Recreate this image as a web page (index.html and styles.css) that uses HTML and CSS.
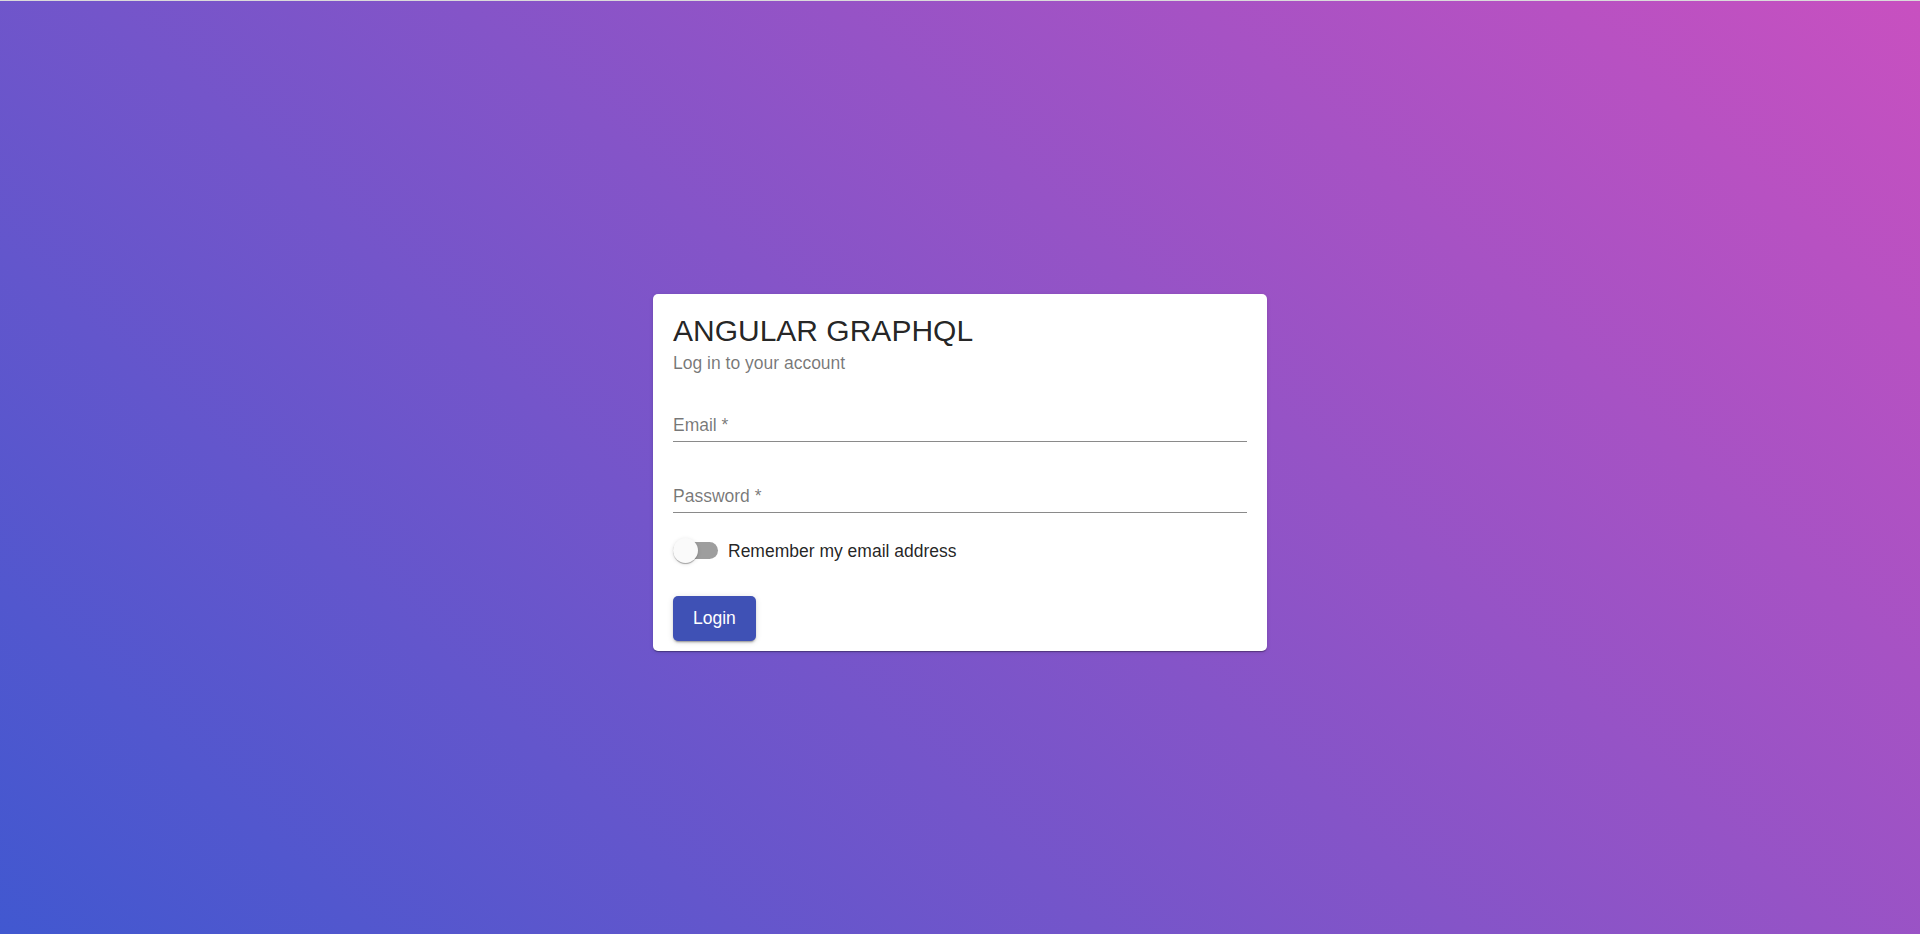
FILE: index.html
```html
<!DOCTYPE html>
<html lang="en">
<head>
<meta charset="utf-8">
<title>Angular GraphQL - Login</title>
<link rel="stylesheet" href="styles.css">
</head>
<body>
<div class="page">
  <div class="card">
    <div class="card-title">ANGULAR GRAPHQL</div>
    <div class="card-subtitle">Log in to your account</div>
    <form class="form">
      <label class="field">
        <span class="field-label">Email *</span>
        <span class="field-line"></span>
      </label>
      <label class="field field-password">
        <span class="field-label">Password *</span>
        <span class="field-line"></span>
      </label>
      <div class="toggle-row">
        <span class="toggle">
          <span class="toggle-track"></span>
          <span class="toggle-thumb"></span>
        </span>
        <span class="toggle-label">Remember my email address</span>
      </div>
      <div class="actions">
        <button type="button" class="btn">Login</button>
      </div>
    </form>
  </div>
</div>
</body>
</html>
```

FILE: styles.css
```css
html, body {
  margin: 0;
  padding: 0;
  height: 100%;
}

body {
  font-family: "Liberation Sans", Arial, sans-serif;
  border-top: 1px solid #dadada;
  box-sizing: border-box;
  background: linear-gradient(43deg, #4158d0 0%, #c850c0 100%);
}

.page {
  box-sizing: border-box;
  height: 933px;
  display: flex;
  justify-content: center;
  align-items: flex-start;
  padding-top: 293px;
}

.card {
  width: 614px;
  box-sizing: border-box;
  background: #ffffff;
  border-radius: 5px;
  padding: 20px 20px 10px;
  box-shadow: 0 2px 1px -1px rgba(0,0,0,.2), 0 1px 1px 0 rgba(0,0,0,.14), 0 1px 4px 0 rgba(0,0,0,.12);
}

.card-title {
  font-size: 30px;
  line-height: 34px;
  color: rgba(0,0,0,.87);
  font-weight: 400;
}

.card-subtitle {
  margin-top: 5px;
  font-size: 17.5px;
  line-height: 20px;
  color: rgba(0,0,0,.54);
}

.form {
  margin: 0;
  display: flex;
  flex-direction: column;
}

.field {
  display: flex;
  flex-direction: column;
  margin-top: 42px;
}

.field-password {
  margin-top: 44px;
}

.field-label {
  font-size: 17.5px;
  line-height: 20px;
  color: rgba(0,0,0,.54);
  padding-bottom: 6px;
}

.field-line {
  display: block;
  height: 1px;
  background: #8a8a8a;
}

.toggle-row {
  margin-top: 24px;
  display: flex;
  align-items: center;
  height: 27px;
}

.toggle {
  position: relative;
  width: 45px;
  height: 27px;
  flex: none;
  display: flex;
  align-items: center;
}

.toggle-track {
  display: block;
  width: 45px;
  height: 17.5px;
  border-radius: 9px;
  background: rgba(0,0,0,.38);
}

.toggle-thumb {
  position: absolute;
  left: 0;
  top: 1px;
  width: 25px;
  height: 25px;
  border-radius: 50%;
  background: #fafafa;
  box-shadow: 0 2px 1px -1px rgba(0,0,0,.2), 0 1px 1px 0 rgba(0,0,0,.14), 0 1px 4px 0 rgba(0,0,0,.12);
}

.toggle-label {
  margin-left: 10px;
  font-size: 17.5px;
  line-height: 20px;
  color: rgba(0,0,0,.87);
  padding-top: 0;
}

.actions {
  margin-top: 32px;
  display: flex;
}

.btn {
  height: 45px;
  min-width: 80px;
  padding: 0 20px;
  border: none;
  border-radius: 5px;
  background: #3f51b5;
  color: #ffffff;
  font-family: "Liberation Sans", Arial, sans-serif;
  font-size: 17.5px;
  font-weight: 500;
  line-height: 45px;
  box-shadow: 0 3px 1px -2px rgba(0,0,0,.2), 0 2px 2px 0 rgba(0,0,0,.14), 0 1px 6px 0 rgba(0,0,0,.12);
  cursor: pointer;
}
```
